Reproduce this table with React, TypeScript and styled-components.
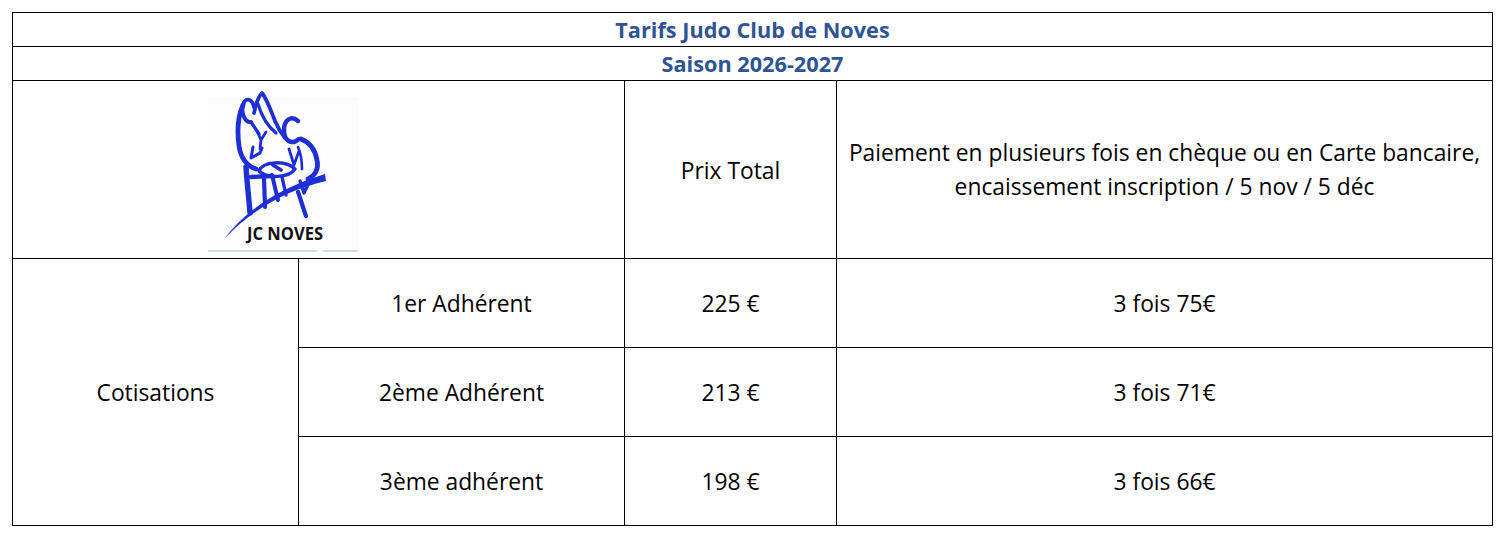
import React from "react";
import styled, { createGlobalStyle } from "styled-components";

const Global = createGlobalStyle`
  html, body { margin: 0; padding: 0; background: #ffffff; }
  body { font-family: "Open Sans", "Liberation Sans", sans-serif; color: #000; }
`;

const Grid = styled.div`
  display: grid;
  grid-template-columns: 286px 326px 212px 656px;
  grid-template-rows: 34px 34px 178px 89px 89px 89px;
  margin: 12px 0 0 12px;
  width: max-content;
  border-top: 1px solid #000;
  border-left: 1px solid #000;
`;

const Cell = styled.div<{ $col?: string; $row?: string }>`
  box-sizing: border-box;
  border-right: 1px solid #000;
  border-bottom: 1px solid #000;
  display: flex;
  align-items: center;
  justify-content: center;
  text-align: center;
  font-size: 22.8px;
  line-height: 34px;
  padding-top: 2px;
  grid-column: ${(p) => p.$col ?? "auto"};
  grid-row: ${(p) => p.$row ?? "auto"};
`;

const TitleCell = styled(Cell)`
  grid-column: 1 / 5;
  font-weight: 700;
  font-size: 21.7px;
  color: #2f5496;
  padding-top: 0;
`;

const LogoCell = styled(Cell)`
  grid-column: 1 / 3;
  justify-content: flex-start;
  padding-left: 193px;
  padding-top: 4px;
`;

const TextBlock = styled.div`
  display: flex;
  flex-direction: column;
  margin-top: -2px;
`;

const LOGO_BLUE = "#1f2fd8";

function Logo() {
  return (
    <svg width="155" height="165" viewBox="205 88 155 165">
      <rect x="207" y="96" width="151" height="152" fill="#fcfcfd" />
      <g fill="none" stroke={LOGO_BLUE} strokeLinecap="round" strokeLinejoin="round">
        {/* left head loop */}
        <path d="M253 106 C251 97 244 96 242 104 C240 112 244 122 250 121" strokeWidth="3.8" />
        {/* left body outline */}
        <path d="M242 104 C237 115 236 130 238 145 C240 158 246 165 255 168" strokeWidth="4.8" />
        {/* hair spike */}
        <path d="M253 112 C255 102 257 96 261 92 C266 98 270 110 274 120 C277 127 280 132 284 137" strokeWidth="3.8" />
        <path d="M257 103 C260 113 265 124 275 132" strokeWidth="3.2" />
        <path d="M250 121 L258 133" strokeWidth="3.2" />
        {/* Y strokes */}
        <path d="M256 130 L260 139 L265 131 M260 139 L259 148" strokeWidth="2.8" />
        <path d="M252 146 L250 157 L259 152 L261 147" strokeWidth="3" />
        {/* right head C */}
        <path d="M297 120 C290 114 283 119 283 129 C283 139 290 145 298 138" strokeWidth="4.4" />
        {/* right back */}
        <path d="M300 138 C308 141 314 148 316 159 C318 168 314 175 307 178" strokeWidth="4.8" />
        <path d="M297 146 C300 153 301 160 301 168" strokeWidth="2.6" />
        <path d="M288 148 L293 164 L298 150" strokeWidth="2.8" />
        {/* belt */}
        <path d="M258 170 C262 160 285 159 294 168 C288 177 266 178 258 170 Z" strokeWidth="3.4" />
        <path d="M272 164 L280 169" strokeWidth="3.8" />
        <path d="M250 176 L271 175" strokeWidth="4.4" />
        {/* legs */}
        <path d="M245 166 C246 182 248 198 249 212" strokeWidth="5.4" />
        <path d="M263 177 L264 206" strokeWidth="4.2" />
        <path d="M271 174 L277 199" strokeWidth="4" />
        <path d="M281 176 L285 194" strokeWidth="3.4" />
        <path d="M299 180 L303 192 L308 181" strokeWidth="3.4" />
        <path d="M297 191 C300 199 302 207 305 215" strokeWidth="4.2" />
      </g>
      {/* swoosh */}
      <path d="M224 237 C242 213 272 189 324 173 L325 180 C286 189 252 208 224 237 Z" fill={LOGO_BLUE} />
      <text
        x="246"
        y="239"
        fontFamily="'Open Sans', sans-serif"
        fontWeight="700"
        fontSize="17.5"
        fill="#111"
        textLength="76"
        lengthAdjust="spacingAndGlyphs"
      >
        JC NOVES
      </text>
      <line x1="207" y1="250" x2="316" y2="250" stroke="#b9d3df" strokeWidth="1.4" />
      <line x1="322" y1="250" x2="357" y2="250" stroke="#b9d3df" strokeWidth="1.4" />
    </svg>
  );
}

const rows = [
  { label: "1er Adhérent", price: "225 €", split: "3 fois 75€" },
  { label: "2ème Adhérent", price: "213 €", split: "3 fois 71€" },
  { label: "3ème adhérent", price: "198 €", split: "3 fois 66€" },
];

export default function App() {
  return (
    <>
      <Global />
      <Grid>
        <TitleCell>Tarifs Judo Club de Noves</TitleCell>
        <TitleCell>Saison 2026-2027</TitleCell>
        <LogoCell>
          <Logo />
        </LogoCell>
        <Cell>Prix Total</Cell>
        <Cell>
          <TextBlock>
            <span>Paiement en plusieurs fois en chèque ou en Carte bancaire,</span>
            <span>encaissement inscription / 5 nov / 5 déc</span>
          </TextBlock>
        </Cell>
        <Cell $col="1" $row="4 / 7">Cotisations</Cell>
        {rows.map((r) => (
          <React.Fragment key={r.label}>
            <Cell $col="2">{r.label}</Cell>
            <Cell $col="3">{r.price}</Cell>
            <Cell $col="4">{r.split}</Cell>
          </React.Fragment>
        ))}
      </Grid>
    </>
  );
}
